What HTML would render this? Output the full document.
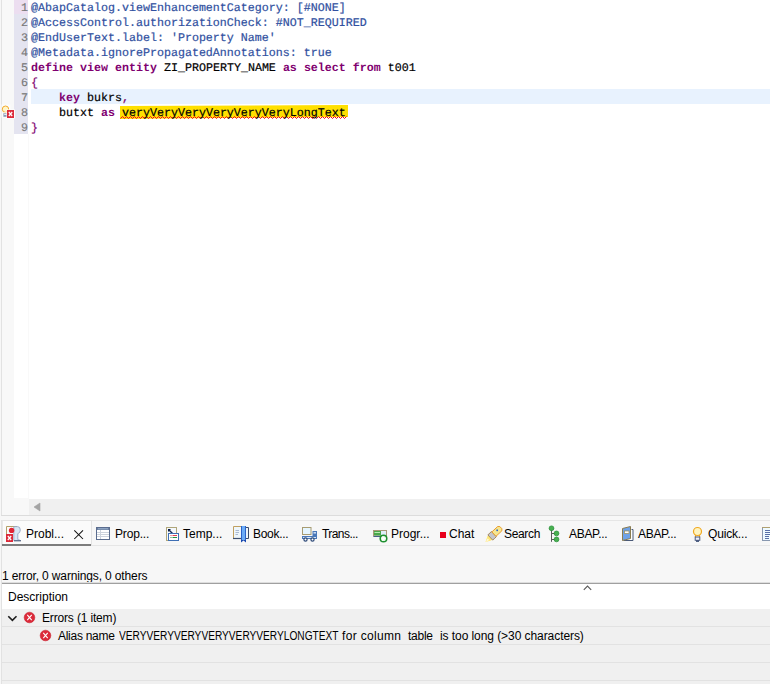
<!DOCTYPE html>
<html><head><meta charset="utf-8">
<style>
*{margin:0;padding:0;box-sizing:border-box}
html,body{width:770px;height:684px;overflow:hidden;background:#f7f7f7;position:relative;font-family:"Liberation Sans",sans-serif}
.a{position:absolute}
#editor{left:1px;top:0;width:769px;height:516px;background:#fff}
#lborder{left:1px;top:0;width:1px;height:516px;background:#e2e2e2}
#lborder2{left:1px;top:520px;width:1px;height:164px;background:#e2e2e2}
#ruler{left:2px;top:0;width:26px;height:515px;background:#f8f8f8}
#lnw{left:14px;top:134px;width:14px;height:364px;background:#fff}
#lnbg{left:14px;top:-1px;width:14px;height:135px;background:#e4e4f0}
#ln1{left:14px;top:-1px;width:14px;height:15px;background:#ecdef0}
#cur{left:31px;top:89px;width:739px;height:15px;background:#e8f2fe}
.ln{position:absolute;left:14px;-webkit-text-stroke:0.15px currentColor;width:14px;text-align:right;font-family:"Liberation Mono",monospace;font-size:11.67px;text-rendering:geometricPrecision;color:#787878;line-height:15px;height:15px}
.cl{position:absolute;left:31px;-webkit-text-stroke:0.2px currentColor;font-family:"Liberation Mono",monospace;font-size:11.67px;text-rendering:geometricPrecision;line-height:15px;height:15px;white-space:pre;color:#000}
.an{color:#3050a0}
.kw{color:#7f0070;font-weight:bold;-webkit-text-stroke:0}
.pu{color:#7f0070}
#hsb{left:29px;top:499px;width:741px;height:16px;background:#f0f0f0}
#ebot{left:1px;top:515px;width:769px;height:1px;background:#dcdcdc}
#tabs{left:2px;top:520px;width:768px;height:26px;border-top:1px solid #e6e6e6;border-bottom:1px solid #e6e6e6}
.tt{position:absolute;top:526px;height:17px;font-size:12px;color:#000;line-height:17px;white-space:nowrap}
#status{left:2px;top:568px;font-size:12px;line-height:17px;letter-spacing:-0.14px;color:#000;white-space:nowrap}
#pline{left:2px;top:582px;width:768px;height:2px;background:#a0a0a0;border-top:1px solid #dedede}
#thead{left:2px;top:584px;width:768px;height:25px;background:#fff}
.row{position:absolute;left:2px;width:768px;height:18px;background:#f0f0f0;border-bottom:1px solid #e2e2e2}
.rt{position:absolute;font-size:12px;line-height:17px;white-space:nowrap;color:#000}
</style></head><body>
<div id="editor" class="a"></div>
<div id="ruler" class="a"></div>
<div id="lnw" class="a"></div>
<div class="a" style="left:28px;top:134px;width:1px;height:364px;background:#f9f9f9"></div>
<div class="a" style="left:28px;top:498px;width:1px;height:17px;background:#f8f8f8"></div>
<div id="lborder" class="a"></div>
<div id="lborder2" class="a"></div>
<div id="lnbg" class="a"></div>
<div id="ln1" class="a"></div>
<div id="cur" class="a"></div>
<!-- line numbers -->
<div class="ln" style="top:1px">1</div>
<div class="ln" style="top:16px">2</div>
<div class="ln" style="top:31px">3</div>
<div class="ln" style="top:46px">4</div>
<div class="ln" style="top:61px">5</div>
<div class="ln" style="top:76px">6</div>
<div class="ln" style="top:91px">7</div>
<div class="ln" style="top:106px">8</div>
<div class="ln" style="top:121px">9</div>
<!-- yellow marker -->
<svg class="a" style="left:0;top:0" width="770" height="140"><polygon points="120,106 348,105 348,117 120,119" fill="#ffe000"/>
<polyline fill="none" stroke="#f00020" stroke-width="1" points="120.5,118.5 122.5,116.5 124.5,118.5 126.5,116.5 128.5,118.5 130.5,116.5 132.5,118.5 134.5,116.5 136.5,118.5 138.5,116.5 140.5,118.5 142.5,116.5 144.5,118.5 146.5,116.5 148.5,118.5 150.5,116.5 152.5,118.5 154.5,116.5 156.5,118.5 158.5,116.5 160.5,118.5 162.5,116.5 164.5,118.5 166.5,116.5 168.5,118.5 170.5,116.5 172.5,118.5 174.5,116.5 176.5,118.5 178.5,116.5 180.5,118.5 182.5,116.5 184.5,118.5 186.5,116.5 188.5,118.5 190.5,116.5 192.5,118.5 194.5,116.5 196.5,118.5 198.5,116.5 200.5,118.5 202.5,116.5 204.5,118.5 206.5,116.5 208.5,118.5 210.5,116.5 212.5,118.5 214.5,116.5 216.5,118.5 218.5,116.5 220.5,118.5 222.5,116.5 224.5,118.5 226.5,116.5 228.5,118.5 230.5,116.5 232.5,118.5 234.5,116.5 236.5,118.5 238.5,116.5 240.5,118.5 242.5,116.5 244.5,118.5 246.5,116.5 248.5,118.5 250.5,116.5 252.5,118.5 254.5,116.5 256.5,118.5 258.5,116.5 260.5,118.5 262.5,116.5 264.5,118.5 266.5,116.5 268.5,118.5 270.5,116.5 272.5,118.5 274.5,116.5 276.5,118.5 278.5,116.5 280.5,118.5 282.5,116.5 284.5,118.5 286.5,116.5 288.5,118.5 290.5,116.5 292.5,118.5 294.5,116.5 296.5,118.5 298.5,116.5 300.5,118.5 302.5,116.5 304.5,118.5 306.5,116.5 308.5,118.5 310.5,116.5 312.5,118.5 314.5,116.5 316.5,118.5 318.5,116.5 320.5,118.5 322.5,116.5 324.5,118.5 326.5,116.5 328.5,118.5 330.5,116.5 332.5,118.5 334.5,116.5 336.5,118.5 338.5,116.5 340.5,118.5 342.5,116.5 344.5,118.5 346.5,116.5"/>
</svg>
<div class="cl an" style="top:1px">@AbapCatalog.viewEnhancementCategory: [#NONE]</div>
<div class="cl an" style="top:16px">@AccessControl.authorizationCheck: #NOT_REQUIRED</div>
<div class="cl an" style="top:31px">@EndUserText.label: 'Property Name'</div>
<div class="cl an" style="top:46px">@Metadata.ignorePropagatedAnnotations: true</div>
<div class="cl" style="top:61px"><span class="kw">define</span> <span class="kw">view</span> <span class="kw">entity</span> ZI_PROPERTY_NAME <span class="kw">as</span> <span class="kw">select</span> <span class="kw">from</span> t001</div>
<div class="cl pu" style="top:76px">{</div>
<div class="cl" style="top:91px">    <span class="kw">key</span> bukrs<span class="pu">,</span></div>
<div class="cl" style="top:106px">    butxt <span class="kw">as</span> veryVeryVeryVeryVeryVeryLongText</div>
<div class="cl pu" style="top:121px">}</div>
<!-- marker icon -->
<svg class="a" style="left:1px;top:104px" width="14" height="15" viewBox="0 0 14 15">
<rect x="0.5" y="0.5" width="9" height="13" fill="#fcfcfc"/>
<circle cx="4.5" cy="5.2" r="3.2" fill="#fff6c8" stroke="#f2aa30" stroke-width="1"/>
<rect x="2.6" y="8.3" width="3.8" height="1.2" fill="#fff8e0"/>
<rect x="2.4" y="9.2" width="4.2" height="3.6" fill="#8a9ab4"/>
<rect x="3.2" y="9.8" width="2.6" height="1.2" fill="#e8eef6"/>
<rect x="5.5" y="5.5" width="8.5" height="9" fill="#fdfdfd"/>
<rect x="6" y="6" width="7" height="8" fill="#dc2c3c"/>
<path d="M7.8 8 L11.2 12 M11.2 8 L7.8 12" stroke="#fff" stroke-width="1.2"/>
</svg>
<div id="hsb" class="a"></div>
<svg class="a" style="left:32px;top:502px" width="10" height="10"><polygon points="2,5 8,1 8,9" fill="#a4a4a4" stroke="#a4a4a4" stroke-width="0.6" stroke-linejoin="round"/></svg>
<div id="ebot" class="a"></div>

<div id="tabs" class="a"></div>
<div class="a" style="left:2px;top:520px;width:90px;height:25px;background:#fbfbfb;border-top:1px solid #e3e3e3;border-left:1px solid #e8e8e8;border-right:1px solid #e3e3e3"></div>
<div class="a" style="left:2px;top:544px;width:89px;height:2px;background:#7d7d7d"></div>
<!-- tab icons -->
<svg class="a" style="left:0;top:520px" width="770" height="26" viewBox="0 520 770 26">
 <!-- problems -->
 <path d="M6.5 534 V526.5 H17" fill="none" stroke="#b4a068" stroke-width="1"/>
 <path d="M13.8 526.6 H17.5 Q20.3 526.6 20.3 530 Q20.3 533 17.8 533.6 V539.6 L20.8 540.6 H13.8 Z" fill="#d8e6f4" stroke="#8c9cbc" stroke-width="0.8"/><path d="M14 540.8 H21" stroke="#4a5a7a" stroke-width="1"/>
 <circle cx="11.6" cy="530.4" r="2.7" fill="#e02535"/>
 <rect x="6" y="534" width="7" height="8" fill="#dc2a3a"/>
 <path d="M7.8 536 L11.2 540 M11.2 536 L7.8 540" stroke="#fff" stroke-width="1.2"/>
 <!-- properties table -->
 <rect x="96.5" y="527.5" width="13" height="12" fill="#fff" stroke="#5a6c8e" stroke-width="1"/>
 <rect x="97" y="528" width="12" height="2" fill="#6a7e9e"/><path d="M98 528.8 H108" stroke="#a8c0dc" stroke-width="0.8"/>
 <path d="M97 532.5 H109 M97 534.5 H109 M97 536.5 H109 M100.5 530 V539" stroke="#cdd3dc" stroke-width="1"/>
 <!-- templates -->
 <rect x="166.5" y="527.5" width="10" height="13" fill="#f4f8fc" stroke="#b0a67a" stroke-width="1"/>
 <path d="M168.5 529.5 L172.5 533.5" stroke="#1a2f5a" stroke-width="1.4"/>
 <path d="M168 529 L171 529 L168 532 Z" fill="#0a1a40"/>
 <rect x="168.5" y="533.5" width="10" height="7" fill="#fff" stroke="#3e6fb4" stroke-width="1"/>
 <path d="M170.5 535.5 H171.5 M172.5 535.5 H177" stroke="#e04050" stroke-width="1"/>
 <path d="M170.5 537.5 H171.5 M172.5 537.5 H177" stroke="#2a9040" stroke-width="1"/>
 <!-- bookmarks -->
 <rect x="233" y="527" width="8" height="12" fill="#eef6fb"/>
 <path d="M233.5 539 V526.5 H241" fill="none" stroke="#c0a060" stroke-width="1"/>
 <path d="M233 538.5 H241" stroke="#3e5070" stroke-width="1.2"/>
 <path d="M235.5 530.5 H239 M235.5 532.5 H239 M235.5 534.5 H238" stroke="#98aac8" stroke-width="0.8"/>
 <rect x="241" y="526" width="5" height="14" fill="#6cacf6"/>
 <path d="M241.5 526 V541.5 M245.5 526 V541.5" stroke="#2a62c8" stroke-width="1"/>
 <path d="M241 540 L241 542.5 L243.5 540.5 L246 542.5 L246 540 Z" fill="#1a4ab0"/>
 <rect x="246" y="527" width="2.5" height="12" fill="#eef6fb"/>
 <path d="M246 527.5 H248.5 V538.5 H246" fill="none" stroke="#3a4a68" stroke-width="1"/>
<!-- transport -->
 <rect x="302.5" y="527.5" width="8.5" height="7" fill="#e6f6ff" stroke="#a89c72" stroke-width="1"/>
 <rect x="312.5" y="531" width="4.5" height="8" fill="#4a78b8"/><rect x="313.5" y="532" width="2.5" height="1.6" fill="#c8daf0"/>
 <rect x="302" y="536" width="15" height="3" fill="#4a78b8"/>
 <path d="M303 537.5 H316" stroke="#d8e8f8" stroke-width="1"/>
 <circle cx="305.5" cy="539.5" r="1.6" fill="#fff" stroke="#2e4a78" stroke-width="1.2"/>
 <circle cx="312.5" cy="539.5" r="1.6" fill="#fff" stroke="#2e4a78" stroke-width="1.2"/>
 <!-- progress -->
 <rect x="373.5" y="530.5" width="13" height="5.5" fill="#e0eefa" stroke="#a89878" stroke-width="1"/>
 <rect x="374" y="531" width="7" height="4.5" fill="#4aa84a"/>
 <path d="M374.5 532.5 H380" stroke="#b8ecb0" stroke-width="1"/>
 <path d="M373.5 536.5 H381" stroke="#4a5e88" stroke-width="1"/>
 <circle cx="383.5" cy="538.5" r="3.3" fill="#e8f8e8" stroke="#1e9030" stroke-width="1.5"/>
 <path d="M382.2 536.2 L385.8 538.5 L382.2 540.8 Z" fill="#ffffff"/>
 <!-- chat -->
 <rect x="440" y="532" width="6" height="6" fill="#e8001c"/>
 <!-- search pen -->
 <g transform="translate(493.2 534.8) rotate(-43)">
  <path d="M-10.5 0 L-5.5 -2.8 L-4 -2.8 L-4 2.8 L-5.5 2.8 Z" fill="#ffe878"/>
  <path d="M-10.5 0 L-6.5 -1 L-6.5 1 Z" fill="#fff8e0"/>
  <path d="M-4 -3.5 Q-1.5 -3.8 1 -3.5 L1 3.5 Q-1.5 3.8 -4 3.5 Z" fill="#c4c6cc" stroke="#9a7a48" stroke-width="0.8"/>
  <path d="M1 -3 L9 -3 L10.5 -1.5 L10.5 1.5 L9 3 L1 3 Z" fill="#f6e690" stroke="#e89a28" stroke-width="0.9"/>
  <circle cx="6" cy="-0.6" r="0.9" fill="#2a62c8"/>
 </g>
<!-- abap tree -->
 <path d="M551.5 530 V541.8 M551.5 533.5 H555 M551.5 539.5 H555" stroke="#5a5a5a" stroke-width="1"/>
 <circle cx="551.5" cy="528.3" r="2.4" fill="#48b050" stroke="#208a30" stroke-width="0.7"/>
 <circle cx="556.5" cy="533.4" r="2.4" fill="#48b050" stroke="#208a30" stroke-width="0.7"/>
 <circle cx="556.5" cy="539.4" r="2.4" fill="#48b050" stroke="#208a30" stroke-width="0.7"/>
<!-- abap book -->
 <path d="M631.5 529.5 H633 V540.5 H624 V539" fill="#fff" stroke="#4a5a78" stroke-width="1"/>
 <path d="M622.5 528.5 L630.5 526.5 V538.5 L622.5 540.5 Z" fill="#6ea2e8" stroke="#8a7c50" stroke-width="1"/>
 <rect x="624.5" y="531" width="4.5" height="2.5" fill="#fff" stroke="#9a8a50" stroke-width="0.7"/>
 <!-- bulb -->
 <circle cx="697.5" cy="531.5" r="4" fill="#fff4c0" stroke="#f0a820" stroke-width="1.2"/>
 <path d="M695.5 535 L695.5 537 M699.5 535 L699.5 537" stroke="#f0a820" stroke-width="1.1"/>
 <rect x="695.2" y="537" width="4.6" height="3.3" fill="#f0f0f8" stroke="#4a5a80" stroke-width="1"/>
 <rect x="696" y="540.5" width="3" height="1.3" fill="#2a3f68"/>
 <!-- partial doc -->
 <rect x="762.5" y="527.5" width="9" height="13" fill="#eefaff" stroke="#8898b0" stroke-width="1"/>
 <path d="M762 527.5 H771" stroke="#b0a070" stroke-width="1"/>
 <path d="M765 530.5 H771 M765 532.5 H771 M765 534.5 H771 M765 536.5 H769 M765 538.5 H769" stroke="#5870a8" stroke-width="1"/>
 <!-- close X -->
 <path d="M74.3 530.3 L83 539 M83 530.3 L74.3 539" stroke="#111" stroke-width="1.05"/>
</svg>
<div class="tt" style="left:26px">Probl...</div>
<div class="tt" style="left:115px;letter-spacing:-0.17px">Prop...</div>
<div class="tt" style="left:183px">Temp...</div>
<div class="tt" style="left:253px;letter-spacing:-0.28px">Book...</div>
<div class="tt" style="left:322px;letter-spacing:-0.57px">Trans...</div>
<div class="tt" style="left:391px">Progr...</div>
<div class="tt" style="left:449px">Chat</div>
<div class="tt" style="left:504px;letter-spacing:-0.34px">Search</div>
<div class="tt" style="left:569px;letter-spacing:-0.3px">ABAP...</div>
<div class="tt" style="left:638px;letter-spacing:-0.3px">ABAP...</div>
<div class="tt" style="left:708px;letter-spacing:-0.17px">Quick...</div>
<div id="status" class="a">1 error, 0 warnings, 0 others</div>
<div id="pline" class="a"></div>
<div id="thead" class="a"></div>
<div class="rt" style="left:8px;top:589px">Description</div>
<svg class="a" style="left:583px;top:584px" width="10" height="7"><polyline points="0.8,5.8 4.5,2 8.2,5.8" fill="none" stroke="#5a5a5a" stroke-width="1.1"/></svg>
<div class="row" style="top:609px"></div>
<div class="row" style="top:627px"></div>
<div class="row" style="top:645px"></div>
<div class="row" style="top:663px"></div>
<div class="row" style="top:681px"></div>
<div class="rt" style="left:42px;top:610px;letter-spacing:-0.16px">Errors (1 item)</div>
<div class="rt" style="left:58px;top:628px;letter-spacing:-0.28px">Alias name</div>
<div class="rt" style="left:119px;top:628px;transform:scaleX(0.846);transform-origin:0 0">VERYVERYVERYVERYVERYVERYLONGTEXT</div>
<div class="rt" style="left:342px;top:628px;letter-spacing:0.33px">for column</div>
<div class="rt" style="left:408px;top:628px;letter-spacing:-0.25px">table</div>
<div class="rt" style="left:440px;top:628px;letter-spacing:-0.07px">is too long (&gt;30 characters)</div>
<svg class="a" style="left:0;top:609px" width="60" height="36" viewBox="0 609 60 36">
 <path d="M8.3 616.3 L12.4 620.4 L16.5 616.3" fill="none" stroke="#1e1e1e" stroke-width="1.6"/>
 <circle cx="29.5" cy="617.5" r="5.3" fill="#dc2a3a" stroke="#c8202e" stroke-width="0.6"/>
 <path d="M27.3 614.8 L31.7 620.2 M31.7 614.8 L27.3 620.2" stroke="#fff" stroke-width="1.1"/>
 <circle cx="45.5" cy="635.5" r="5.3" fill="#dc2a3a" stroke="#c8202e" stroke-width="0.6"/>
 <path d="M43.3 632.8 L47.7 638.2 M47.7 632.8 L43.3 638.2" stroke="#fff" stroke-width="1.1"/>
</svg>
</body></html>
